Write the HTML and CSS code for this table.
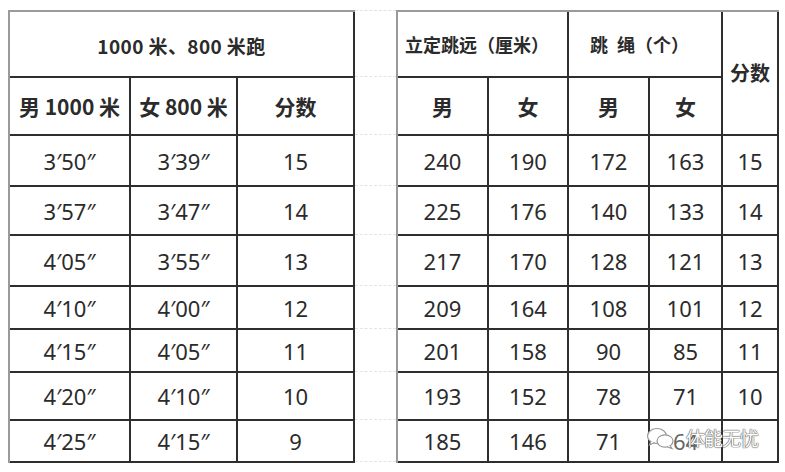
FILE: index.html
```html
<!DOCTYPE html>
<html lang="zh">
<head>
<meta charset="utf-8">
<link rel="stylesheet" href="styles.css">
</head>
<body>
<div class="page">
  <div class="tbl tleft">
    <div class="c hd1 span3">1000 米、800 米跑</div>
    <div class="c hd2">男 1000 米</div>
    <div class="c hd2">女 800 米</div>
    <div class="c hd2">分数</div>
    <div class="c">3′50″</div><div class="c">3′39″</div><div class="c">15</div>
    <div class="c">3′57″</div><div class="c">3′47″</div><div class="c">14</div>
    <div class="c">4′05″</div><div class="c">3′55″</div><div class="c">13</div>
    <div class="c">4′10″</div><div class="c">4′00″</div><div class="c">12</div>
    <div class="c">4′15″</div><div class="c">4′05″</div><div class="c">11</div>
    <div class="c">4′20″</div><div class="c">4′10″</div><div class="c">10</div>
    <div class="c">4′25″</div><div class="c">4′15″</div><div class="c">9</div>
  </div>
  <div class="gap">
    <div></div><div></div><div></div><div></div><div></div><div></div><div></div><div></div><div></div>
  </div>
  <div class="tbl tright">
    <div class="c hd3 span2">立定跳远（厘米）</div>
    <div class="c hd3 hd3b span2">跳&ensp;绳（个）</div>
    <div class="c hd4 rspan2">分数</div>
    <div class="c hd2">男</div>
    <div class="c hd2">女</div>
    <div class="c hd2">男</div>
    <div class="c hd2">女</div>
    <div class="c">240</div><div class="c">190</div><div class="c">172</div><div class="c">163</div><div class="c">15</div>
    <div class="c">225</div><div class="c">176</div><div class="c">140</div><div class="c">133</div><div class="c">14</div>
    <div class="c">217</div><div class="c">170</div><div class="c">128</div><div class="c">121</div><div class="c">13</div>
    <div class="c">209</div><div class="c">164</div><div class="c">108</div><div class="c">101</div><div class="c">12</div>
    <div class="c">201</div><div class="c">158</div><div class="c">90</div><div class="c">85</div><div class="c">11</div>
    <div class="c">193</div><div class="c">152</div><div class="c">78</div><div class="c">71</div><div class="c">10</div>
    <div class="c">185</div><div class="c">146</div><div class="c">71</div><div class="c c64">64</div><div class="c"></div>
  </div>
  <div class="watermark">
    <svg class="wx" width="30" height="24" viewBox="0 0 30 24">
      <ellipse cx="11" cy="10" rx="9.5" ry="7.5" fill="#fff" stroke="#999" stroke-width="1.2"/>
      <path d="M5 15 L3.5 19 L8.5 16.5" fill="#fff" stroke="#999" stroke-width="1.2"/>
      <ellipse cx="19" cy="15" rx="8" ry="6.2" fill="#fff" stroke="#999" stroke-width="1.2"/>
      <path d="M24 19.5 L26 22.5 L21 20.8" fill="#fff" stroke="#999" stroke-width="1.2"/>
    </svg>
    <span class="wtext">体能无忧</span>
  </div>
</div>
</body>
</html>
```

FILE: styles.css
```css
html, body {
  margin: 0;
  padding: 0;
  background: #ffffff;
}
.page {
  position: relative;
  width: 785px;
  height: 472px;
  display: flex;
  align-items: flex-start;
  padding: 10px 0 0 8px;
  box-sizing: border-box;
  font-family: "Noto Sans", "Open Sans", "Noto Sans CJK SC", sans-serif;
  color: #2b2b2b;
}
.tbl {
  display: grid;
  grid-template-rows: 66px 58px 51px 49px 51px 43px 43px 48px 42px;
  border-top: 2px solid #9a9a9a;
  border-left: 2px solid #9a9a9a;
}
.tleft {
  grid-template-columns: 121px 107px 117px;
}
.tright {
  grid-template-columns: 91px 80px 81px 73px 56px;
}
.c {
  box-sizing: border-box;
  border-right: 2px solid #2e2e2e;
  border-bottom: 2px solid #2e2e2e;
  display: flex;
  align-items: center;
  justify-content: center;
  font-size: 22px;
  line-height: 1;
  white-space: nowrap;
}
.span3 { grid-column: span 3; }
.span2 { grid-column: span 2; }
.rspan2 { grid-row: span 2; }
.hd1 {
  font-family: "Noto Sans CJK SC", sans-serif;
  font-weight: 700;
  font-size: 19px;
  letter-spacing: 0.4px;
  padding-top: 2px;
}
.hd2 {
  font-family: "Noto Sans CJK SC", sans-serif;
  font-weight: 700;
  font-size: 21px;
}
.hd3 {
  font-family: "Noto Sans CJK SC", sans-serif;
  font-weight: 700;
  font-size: 18px;
  justify-content: flex-start;
  padding-left: 7px;
}
.hd3b {
  padding-left: 21px;
}
.hd4 {
  font-family: "Noto Sans CJK SC", sans-serif;
  font-weight: 700;
  font-size: 20px;
}
.gap {
  width: 41px;
  display: grid;
  grid-template-rows: 66px 58px 51px 49px 51px 43px 43px 48px 42px;
  border-top: 1px dashed #e2e2e2;
}
.gap div {
  border-bottom: 1px dashed #e4e4e4;
}
.c64 {
  color: #666;
}
.watermark {
  position: absolute;
  left: 646px;
  top: 424px;
  display: flex;
  align-items: center;
  gap: 10px;
}
.wtext {
  font-family: "Noto Sans CJK SC", sans-serif;
  font-size: 19px;
  color: #ffffff;
  letter-spacing: -1px;
  text-shadow: 0 0 1px #555, 0 0 1px #555, 0 0 1px #555;
}
```
